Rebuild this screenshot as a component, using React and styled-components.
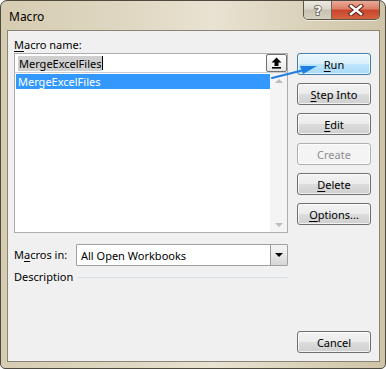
import React from "react";
import styled, { createGlobalStyle, css } from "styled-components";

const Global = createGlobalStyle`
  html, body { margin: 0; padding: 0; background: #ffffff; }
  body { font-family: "Noto Sans", "Open Sans", sans-serif; font-size: 11px; }
  * { box-sizing: border-box; }
`;

const Window = styled.div`
  position: relative;
  width: 386px;
  height: 369px;
  border: 1px solid #4f4a40;
  border-radius: 7px 7px 5px 5px;
  background: linear-gradient(90deg, #d6ccb2 0%, #e0d8c3 35%, #e8e2d2 55%, #dad1b9 80%, #cfc4a7 100%);
  display: flex;
  flex-direction: column;
  overflow: hidden;
`;

const TitleBar = styled.div`
  height: 29px;
  display: flex;
  align-items: flex-start;
  justify-content: space-between;
  flex: none;
`;

const Title = styled.div`
  padding: 8px 0 0 8px;
  font-size: 12px;
  line-height: 16px;
  color: #000;
`;

const Caption = styled.div`
  display: flex;
  margin: -1px 5px 0 0;
  border: 1px solid #5b5448;
  border-top: none;
  border-radius: 0 0 5px 5px;
  overflow: hidden;
  box-shadow: 0 1px 0 rgba(255,255,255,0.6);
`;

const CapBtn = styled.div`
  height: 19px;
  display: flex;
  align-items: center;
  justify-content: center;
  ${(p) =>
    p.$close
      ? css`
          width: 47px;
          background: linear-gradient(180deg, #eab0a0 0%, #dd8068 45%, #c8452b 55%, #d4633f 100%);
        `
      : css`
          width: 28px;
          border-right: 1px solid #6e665a;
          background: linear-gradient(180deg, #eeebe4 0%, #dcd7cc 45%, #c8c1b1 55%, #d6d0c1 100%);
        `}
`;

const CapText = styled.text`
  font-family: "DejaVu Sans", sans-serif;
  font-weight: bold;
  font-size: 13px;
  fill: #fff;
  stroke: #5d574d;
  stroke-width: 1.6px;
  paint-order: stroke;
`;

const Client = styled.div`
  flex: 1;
  margin: 0 5px 6px 6px;
  border: 1px solid #8a8474;
  background: #f0f0f0;
  display: grid;
  grid-template-columns: 274px 74px;
  column-gap: 9px;
  padding: 0 8px 8px 6px;
`;

const LeftCol = styled.div`
  display: flex;
  flex-direction: column;
`;

const RightCol = styled.div`
  display: flex;
  flex-direction: column;
  gap: 8px;
  padding-top: 22px;
`;

const Label = styled.div`
  font-size: 11px;
  line-height: 16px;
  color: #000;
  white-space: nowrap;
`;

const NameLabel = styled(Label)`
  margin-top: 6px;
`;

const Key = styled.span`
  text-decoration: underline;
  text-underline-offset: 2px;
`;

const NameInput = styled.div`
  position: relative;
  height: 20px;
  border: 1px solid #abadb3;
  border-bottom-color: #c9cbd0;
  background: #fff;
  display: flex;
  align-items: center;
  padding-left: 3px;
`;

const Selected = styled.span`
  background: #cfcfcf;
  line-height: 15px;
  padding: 0 1px;
  color: #000;
`;

const Caret = styled.span`
  display: inline-block;
  width: 1px;
  height: 14px;
  background: #000;
`;

const SmallBtn = styled.div`
  position: absolute;
  right: 0;
  top: 0;
  width: 21px;
  height: 18px;
  border: 1px solid #707070;
  border-radius: 2px;
  background: linear-gradient(180deg, #ffffff 0%, #f3f3f3 50%, #e6e6e6 100%);
  display: flex;
  align-items: center;
  justify-content: center;
`;

const ListBox = styled.div`
  height: 160px;
  border: 1px solid #abadb3;
  border-top: none;
  background: #fff;
  display: flex;
`;

const Items = styled.div`
  flex: 1;
  padding: 1px 0 0 1px;
`;

const Item = styled.div`
  height: 15px;
  line-height: 15px;
  padding-left: 2px;
  color: ${(p) => (p.$sel ? "#fff" : "#000")};
  background: ${(p) => (p.$sel ? "#3399ff" : "transparent")};
`;

const ScrollBar = styled.div`
  width: 17px;
  background: #f4f4f4;
  display: flex;
  flex-direction: column;
  justify-content: space-between;
  align-items: center;
  padding: 6px 0 5px;
`;

const Tri = styled.div`
  width: 0;
  height: 0;
  border-left: 4px solid transparent;
  border-right: 4px solid transparent;
  ${(p) =>
    p.$down
      ? css`border-top: 4px solid ${p.$color || "#bcbcbc"};`
      : css`border-bottom: 4px solid ${p.$color || "#bcbcbc"};`}
`;

const Row = styled.div`
  display: flex;
  align-items: center;
`;

const MacrosRow = styled(Row)`
  margin-top: 11px;
  justify-content: space-between;
`;

const Select = styled.div`
  width: 212px;
  height: 22px;
  border: 1px solid #a0a0a0;
  border-radius: 1px;
  background: #fff;
  display: flex;
  align-items: stretch;
  padding: 0 0 0 4px;
`;

const SelectText = styled.div`
  flex: 1;
  display: flex;
  align-items: center;
  color: #000;
`;

const DropBtn = styled.div`
  width: 17px;
  border-left: 1px solid #9a9a9a;
  background: linear-gradient(180deg, #f5f5f5 0%, #e8e8e8 50%, #d6d6d6 100%);
  display: flex;
  align-items: center;
  justify-content: center;
`;

const DescRow = styled(Row)`
  margin-top: 3px;
  gap: 5px;
`;

const Rule = styled.div`
  flex: 1;
  height: 1px;
  background: #d5dfe5;
`;

const Button = styled.div`
  height: 22px;
  border-radius: 3px;
  display: flex;
  align-items: center;
  justify-content: center;
  font-size: 11px;
  color: ${(p) => (p.$disabled ? "#8d8d8d" : "#000")};
  border: 1px solid ${(p) => (p.$primary ? "#3c7fb1" : p.$disabled ? "#adb2b5" : "#707070")};
  background: ${(p) =>
    p.$primary
      ? "linear-gradient(180deg, #eaf6fd 0%, #d9f0fc 50%, #bee6fd 51%, #a7d9f5 100%)"
      : p.$disabled
      ? "linear-gradient(180deg, #f4f4f4 0%, #f4f4f4 100%)"
      : "linear-gradient(180deg, #f2f2f2 0%, #ebebeb 50%, #dddddd 51%, #cfcfcf 100%)"};
  box-shadow: inset 0 0 0 1px rgba(255, 255, 255, 0.7);
`;

const CancelBtn = styled(Button)`
  margin-top: auto;
`;

const ArrowSvg = styled.svg`
  position: absolute;
  left: 0;
  top: 0;
  pointer-events: none;
`;

function UploadIcon() {
  return (
    <svg width="11" height="12" viewBox="0 0 11 12">
      <polygon points="5.5,0.5 10.5,5.5 7.5,5.5 7.5,9 3.5,9 3.5,5.5 0.5,5.5" fill="#000" />
      <rect x="1" y="10" width="9" height="1.6" fill="#000" />
    </svg>
  );
}

function CloseGlyph() {
  return (
    <svg width="16" height="12" viewBox="0 0 16 12">
      <g strokeLinecap="square">
        <path d="M3 2 L13 10 M13 2 L3 10" stroke="#5a2418" strokeWidth="4.4" />
        <path d="M3 2 L13 10 M13 2 L3 10" stroke="#ffffff" strokeWidth="2.4" />
      </g>
    </svg>
  );
}

export default function App() {
  return (
    <>
      <Global />
      <Window>
        <TitleBar>
          <Title>Macro</Title>
          <Caption>
            <CapBtn>
              <svg width="14" height="16" viewBox="0 0 14 16">
                <CapText x="7" y="13" textAnchor="middle">?</CapText>
              </svg>
            </CapBtn>
            <CapBtn $close>
              <CloseGlyph />
            </CapBtn>
          </Caption>
        </TitleBar>
        <Client>
          <LeftCol>
            <NameLabel>
              <Key>M</Key>acro name:
            </NameLabel>
            <NameInput>
              <Selected>MergeExcelFiles</Selected>
              <Caret />
              <SmallBtn>
                <UploadIcon />
              </SmallBtn>
            </NameInput>
            <ListBox>
              <Items>
                <Item $sel>MergeExcelFiles</Item>
              </Items>
              <ScrollBar>
                <Tri />
                <Tri $down />
              </ScrollBar>
            </ListBox>
            <MacrosRow>
              <Label>
                M<Key>a</Key>cros in:
              </Label>
              <Select>
                <SelectText>All Open Workbooks</SelectText>
                <DropBtn>
                  <Tri $down $color="#000" />
                </DropBtn>
              </Select>
            </MacrosRow>
            <DescRow>
              <Label>Description</Label>
              <Rule />
            </DescRow>
          </LeftCol>
          <RightCol>
            <Button $primary>
              <Key>R</Key>un
            </Button>
            <Button>
              <Key>S</Key>tep Into
            </Button>
            <Button>
              <Key>E</Key>dit
            </Button>
            <Button $disabled>Create</Button>
            <Button>
              <Key>D</Key>elete
            </Button>
            <Button>
              <Key>O</Key>ptions...
            </Button>
            <CancelBtn>Cancel</CancelBtn>
          </RightCol>
        </Client>
        <ArrowSvg width="386" height="369">
          <line x1="271" y1="77" x2="303" y2="69" stroke="#1f7fe0" strokeWidth="2" strokeLinecap="round" />
          <polygon points="316,65 299,65 302,73" fill="#1f7fe0" />
        </ArrowSvg>
      </Window>
    </>
  );
}
